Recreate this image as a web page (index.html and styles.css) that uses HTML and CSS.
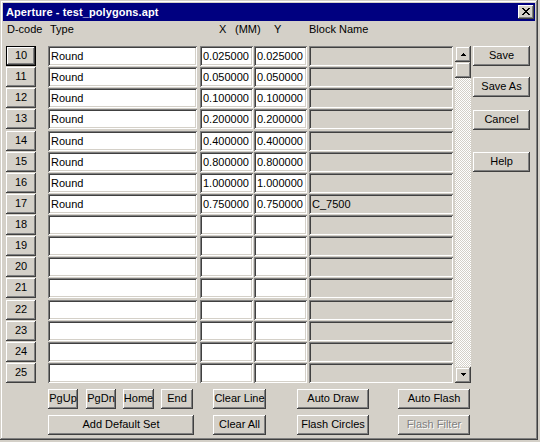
FILE: index.html
```html
<!DOCTYPE html>
<html>
<head>
<meta charset="utf-8">
<title>Aperture</title>
<link rel="stylesheet" href="styles.css">
</head>
<body>
<div class="window">
  <div class="titlebar">
    <span class="title">Aperture - test_polygons.apt</span>
    <div class="close">
      <svg width="8" height="7" viewBox="0 0 8 7" shape-rendering="crispEdges">
        <path d="M0 0h2v1H0zM6 0h2v1H6zM1 1h2v1H1zM5 1h2v1H5zM2 2h4v1H2zM3 3h2v1H3zM2 4h4v1H2zM1 5h2v1H1zM5 5h2v1H5zM0 6h2v1H0zM6 6h2v1H6z" fill="#000"/>
      </svg>
    </div>
  </div>
  <div class="content">
    <div class="header">
      <span class="h-dcode">D-code</span>
      <span class="h-type">Type</span>
      <span class="h-x">X</span>
      <span class="h-mm">(MM)</span>
      <span class="h-y">Y</span>
      <span class="h-blk">Block Name</span>
    </div>
    <div class="main">
      <div class="rows">
        <div class="row"><div class="btn dc default">10</div><div class="field type">Round</div><div class="field x">0.025000</div><div class="field y">0.025000</div><div class="field blk"></div></div>
        <div class="row"><div class="btn dc">11</div><div class="field type">Round</div><div class="field x">0.050000</div><div class="field y">0.050000</div><div class="field blk"></div></div>
        <div class="row"><div class="btn dc">12</div><div class="field type">Round</div><div class="field x">0.100000</div><div class="field y">0.100000</div><div class="field blk"></div></div>
        <div class="row"><div class="btn dc">13</div><div class="field type">Round</div><div class="field x">0.200000</div><div class="field y">0.200000</div><div class="field blk"></div></div>
        <div class="row"><div class="btn dc">14</div><div class="field type">Round</div><div class="field x">0.400000</div><div class="field y">0.400000</div><div class="field blk"></div></div>
        <div class="row"><div class="btn dc">15</div><div class="field type">Round</div><div class="field x">0.800000</div><div class="field y">0.800000</div><div class="field blk"></div></div>
        <div class="row"><div class="btn dc">16</div><div class="field type">Round</div><div class="field x">1.000000</div><div class="field y">1.000000</div><div class="field blk"></div></div>
        <div class="row"><div class="btn dc">17</div><div class="field type">Round</div><div class="field x">0.750000</div><div class="field y">0.750000</div><div class="field blk">C_7500</div></div>
        <div class="row"><div class="btn dc">18</div><div class="field type"></div><div class="field x"></div><div class="field y"></div><div class="field blk"></div></div>
        <div class="row"><div class="btn dc">19</div><div class="field type"></div><div class="field x"></div><div class="field y"></div><div class="field blk"></div></div>
        <div class="row"><div class="btn dc">20</div><div class="field type"></div><div class="field x"></div><div class="field y"></div><div class="field blk"></div></div>
        <div class="row"><div class="btn dc">21</div><div class="field type"></div><div class="field x"></div><div class="field y"></div><div class="field blk"></div></div>
        <div class="row"><div class="btn dc">22</div><div class="field type"></div><div class="field x"></div><div class="field y"></div><div class="field blk"></div></div>
        <div class="row"><div class="btn dc">23</div><div class="field type"></div><div class="field x"></div><div class="field y"></div><div class="field blk"></div></div>
        <div class="row"><div class="btn dc">24</div><div class="field type"></div><div class="field x"></div><div class="field y"></div><div class="field blk"></div></div>
        <div class="row"><div class="btn dc">25</div><div class="field type"></div><div class="field x"></div><div class="field y"></div><div class="field blk"></div></div>
      </div>
      <div class="scroll">
        <div class="sbtn">
          <svg width="5" height="3" viewBox="0 0 5 3" shape-rendering="crispEdges"><path d="M2 0h1v1H2zM1 1h3v1H1zM0 2h5v1H0z" fill="#000"/></svg>
        </div>
        <div class="thumb"></div>
        <div class="track"></div>
        <div class="sbtn">
          <svg width="5" height="3" viewBox="0 0 5 3" shape-rendering="crispEdges"><path d="M0 0h5v1H0zM1 1h3v1H1zM2 2h1v1H2z" fill="#000"/></svg>
        </div>
      </div>
      <div class="side">
        <div class="btn sb save">Save</div>
        <div class="btn sb saveas">Save As</div>
        <div class="btn sb cancel">Cancel</div>
        <div class="btn sb help">Help</div>
      </div>
    </div>
    <div class="bottom">
      <div class="brow">
        <div class="btn b-pgup">PgUp</div>
        <div class="btn b-pgdn">PgDn</div>
        <div class="btn b-home">Home</div>
        <div class="btn b-end">End</div>
        <div class="btn b-clearline">Clear Line</div>
        <div class="btn b-autodraw">Auto Draw</div>
        <div class="btn b-autoflash">Auto Flash</div>
      </div>
      <div class="brow second">
        <div class="btn b-adddef">Add Default Set</div>
        <div class="btn b-clearall">Clear All</div>
        <div class="btn b-flashcirc">Flash Circles</div>
        <div class="btn b-flashfilt disabled">Flash Filter</div>
      </div>
    </div>
  </div>
</div>
</body>
</html>
```

FILE: styles.css
```css
html, body {
  margin: 0;
  padding: 0;
  background: #d4d0c8;
}
body {
  font-family: "Liberation Sans", Arial, sans-serif;
  font-size: 11px;
  color: #000;
}
.window {
  width: 538px;
  height: 440px;
  box-sizing: border-box;
  padding: 3px;
  background: #d4d0c8;
  box-shadow: inset -1px -1px #404040, inset 1px 1px #d4d0c8, inset -2px -2px #808080, inset 2px 2px #fff;
}
.titlebar {
  height: 18px;
  background: #000080;
  display: flex;
  align-items: center;
  justify-content: space-between;
  padding-left: 3px;
}
.title {
  color: #fff;
  font-weight: bold;
  font-size: 11px;
  letter-spacing: 0.1px;
  line-height: 18px;
}
.close {
  width: 16px;
  height: 14px;
  box-sizing: border-box;
  margin-right: 1px;
  background: #d4d0c8;
  box-shadow: inset -1px -1px #404040, inset 1px 1px #fff, inset -2px -2px #808080;
  display: flex;
  align-items: center;
  justify-content: center;
  padding: 0 1px 1px 0;
}
.close svg { display: block; }
.content {
  padding-left: 3px;
}
.header {
  height: 25px;
  display: flex;
  align-items: flex-start;
  padding-left: 1px;
  padding-top: 2px;
  box-sizing: border-box;
  line-height: 13px;
}
.h-dcode { width: 43px; }
.h-type { width: 169px; }
.h-x { width: 16px; }
.h-mm { width: 39px; }
.h-y { width: 35px; }
.main {
  display: flex;
}
.rows {
  display: flex;
  flex-direction: column;
  gap: 1.125px;
}
.row {
  display: flex;
  height: 20px;
}
.btn {
  box-sizing: border-box;
  height: 20px;
  background: #d4d0c8;
  box-shadow: inset -1px -1px #404040, inset 1px 1px #fff, inset -2px -2px #808080;
  display: flex;
  align-items: center;
  justify-content: center;
  line-height: 13px;
  white-space: nowrap;
  padding-bottom: 1px;
}
.btn.default {
  border: 1px solid #000;
  box-shadow: inset -1px -1px #404040, inset 1px 1px #fff, inset -2px -2px #808080;
}
.btn.disabled {
  color: #808080;
  text-shadow: 1px 1px #fff;
}
.dc { width: 30px; }
.field {
  box-sizing: border-box;
  height: 20px;
  background: #fff;
  box-shadow: inset 1px 1px #808080, inset -1px -1px #fff, inset 2px 2px #404040, inset -2px -2px #d4d0c8;
  padding: 2px 2px 0 3px;
  line-height: 16px;
  white-space: nowrap;
  overflow: hidden;
}
.type { width: 149px; margin-left: 12px; }
.x { width: 53px; margin-left: 3px; }
.y { width: 53px; margin-left: 1px; }
.blk { width: 144px; margin-left: 2px; background: #d4d0c8; }
.scroll {
  width: 16px;
  margin-left: 2px;
  display: flex;
  flex-direction: column;
}
.sbtn, .thumb {
  width: 16px;
  height: 16px;
  box-sizing: border-box;
  background: #d4d0c8;
  box-shadow: inset -1px -1px #404040, inset 1px 1px #d4d0c8, inset -2px -2px #808080, inset 2px 2px #fff;
  display: flex;
  align-items: center;
  justify-content: center;
  flex: none;
}
.sbtn svg { display: block; }
.track {
  flex: 1;
  background: repeating-conic-gradient(#d4d0c8 0 25%, #fff 0 50%) 0 0 / 2px 2px;
}
.side {
  margin-left: 2px;
  display: flex;
  flex-direction: column;
}
.sb { width: 57px; }
.saveas { margin-top: 11px; }
.cancel { margin-top: 13px; }
.help { margin-top: 22px; }
.bottom {
  padding-left: 42px;
  padding-top: 6px;
}
.brow {
  display: flex;
}
.brow.second { margin-top: 6px; }
.b-pgup { width: 30px; }
.b-pgdn { width: 30px; margin-left: 8px; }
.b-home { width: 31px; margin-left: 7px; }
.b-end { width: 32px; margin-left: 7px; }
.b-clearline { width: 53px; margin-left: 20px; }
.b-autodraw { width: 72px; margin-left: 31px; }
.b-autoflash { width: 72px; margin-left: 29px; }
.b-adddef { width: 146px; }
.b-clearall { width: 53px; margin-left: 19px; }
.b-flashcirc { width: 72px; margin-left: 31px; }
.b-flashfilt { width: 72px; margin-left: 29px; }
```
